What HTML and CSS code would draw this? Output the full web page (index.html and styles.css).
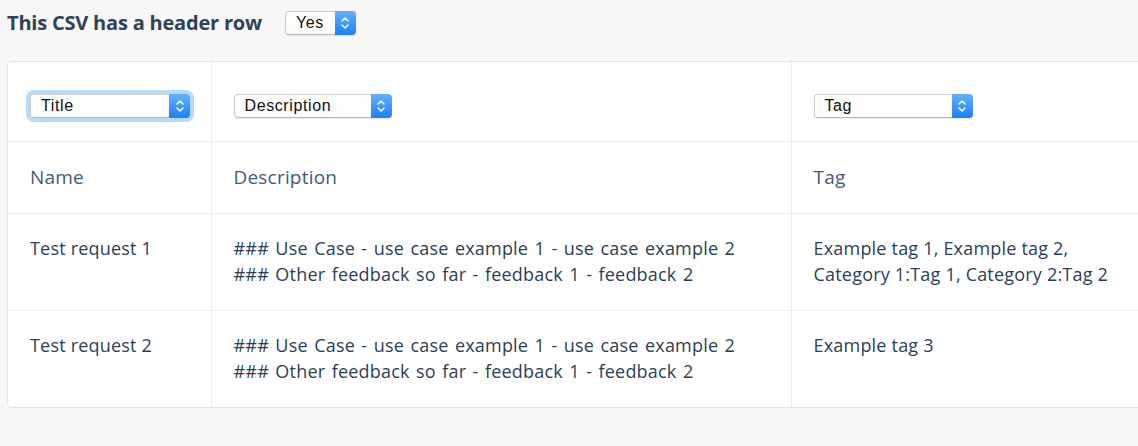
FILE: index.html
```html
<!DOCTYPE html>
<html>
<head>
<meta charset="utf-8">
<link rel="stylesheet" href="styles.css">
</head>
<body>
<div class="top">
  <h1 class="title">This CSV has a header row</h1>
  <div class="sel sel-yes">
    <span class="sel-text">Yes</span>
    <span class="stepper"><svg width="10" height="16" viewBox="0 0 10 16"><path d="M2 6 L5 3 L8 6 M2 10 L5 13 L8 10" fill="none" stroke="#fff" stroke-width="1.5" stroke-linecap="round" stroke-linejoin="round"/></svg></span>
  </div>
</div>
<div class="card">
  <table class="grid">
    <colgroup><col class="c1"><col class="c2"><col class="c3"></colgroup>
    <tr class="row-sel">
      <td>
        <div class="sel sel-title focused">
          <span class="sel-text">Title</span>
          <span class="stepper"><svg width="10" height="16" viewBox="0 0 10 16"><path d="M2 6 L5 3 L8 6 M2 10 L5 13 L8 10" fill="none" stroke="#fff" stroke-width="1.5" stroke-linecap="round" stroke-linejoin="round"/></svg></span>
        </div>
      </td>
      <td>
        <div class="sel sel-desc">
          <span class="sel-text">Description</span>
          <span class="stepper"><svg width="10" height="16" viewBox="0 0 10 16"><path d="M2 6 L5 3 L8 6 M2 10 L5 13 L8 10" fill="none" stroke="#fff" stroke-width="1.5" stroke-linecap="round" stroke-linejoin="round"/></svg></span>
        </div>
      </td>
      <td>
        <div class="sel sel-tag">
          <span class="sel-text">Tag</span>
          <span class="stepper"><svg width="10" height="16" viewBox="0 0 10 16"><path d="M2 6 L5 3 L8 6 M2 10 L5 13 L8 10" fill="none" stroke="#fff" stroke-width="1.5" stroke-linecap="round" stroke-linejoin="round"/></svg></span>
        </div>
      </td>
    </tr>
    <tr class="row-head">
      <th>Name</th>
      <th>Description</th>
      <th>Tag</th>
    </tr>
    <tr class="row-data">
      <td>Test request 1</td>
      <td class="desc">### Use Case - use case example 1 - use case example 2<br>### Other feedback so far - feedback 1 - feedback 2</td>
      <td>Example tag 1, Example tag 2,<br>Category 1:Tag 1, Category 2:Tag 2</td>
    </tr>
    <tr class="row-data">
      <td>Test request 2</td>
      <td class="desc">### Use Case - use case example 1 - use case example 2<br>### Other feedback so far - feedback 1 - feedback 2</td>
      <td>Example tag 3</td>
    </tr>
  </table>
</div>
</body>
</html>
```
FILE: styles.css
```css
html, body {
  margin: 0;
  padding: 0;
  background: #f7f7f7;
  overflow: hidden;
  font-family: "Open Sans", "Noto Sans", sans-serif;
}
.top {
  display: flex;
  align-items: center;
  height: 45px;
  padding-left: 7px;
}
.title {
  margin: 0;
  font-family: "Open Sans", sans-serif;
  font-size: 20px;
  font-weight: 700;
  letter-spacing: -0.2px;
  color: #2c4358;
}
.sel {
  position: relative;
  display: inline-flex;
  align-items: center;
  height: 24px;
  background: linear-gradient(#ffffff, #fbfbfb);
  border: 1px solid #cbcbcb;
  border-bottom-color: #b8b8b8;
  border-radius: 4px;
  box-shadow: 0 0.5px 1px rgba(0,0,0,0.08);
  font-family: "Liberation Sans", Arial, sans-serif;
  font-size: 16px;
  letter-spacing: 0.6px;
  color: #111;
  box-sizing: border-box;
}
.sel-text {
  padding-left: 10px;
  flex: 1;
}
.stepper {
  position: absolute;
  right: -1px;
  top: -1px;
  bottom: -1px;
  width: 21px;
  display: flex;
  align-items: center;
  justify-content: center;
  background: linear-gradient(#65b0fd, #1a80fb);
  border-radius: 0 4px 4px 0;
}
.sel-yes {
  width: 71px;
  margin-left: 23px;
  margin-top: 1px;
}
.sel-title { width: 160px; }
.sel-desc { width: 158px; }
.sel-tag { width: 159px; }
.focused {
  box-shadow: 0 0 0 4px #b7d9fd;
}
.card {
  margin-left: 7px;
  margin-top: 16px;
  width: 1150px;
  background: #fff;
  border: 1px solid #e4e4e4;
  border-radius: 4px;
}
.grid {
  width: 100%;
  border-collapse: collapse;
  table-layout: fixed;
}
.c1 { width: 203px; }
.c2 { width: 580px; }
.grid td, .grid th {
  border-left: 1px solid #ececec;
  border-top: 1px solid #ececec;
  padding: 0 0 0 22px;
  text-align: left;
  vertical-align: top;
}
.grid tr > :first-child { border-left: none; padding-left: 22px; }
.grid tr:first-child > * { border-top: none; }
.row-sel td {
  height: 79px;
  vertical-align: middle;
  padding-top: 10px;
  box-sizing: border-box;
}
.row-head th {
  height: 72px;
  vertical-align: middle;
  font-weight: 400;
  font-size: 19px;
  letter-spacing: 0.2px;
  color: #3f5b77;
  box-sizing: border-box;
}
.row-data td {
  height: 97px;
  padding-top: 21px;
  box-sizing: border-box;
  font-size: 18px;
  letter-spacing: 0.2px;
  line-height: 26px;
  color: #2b3f54;
}
.row-data td.desc {
  word-spacing: 1.5px;
}
```
